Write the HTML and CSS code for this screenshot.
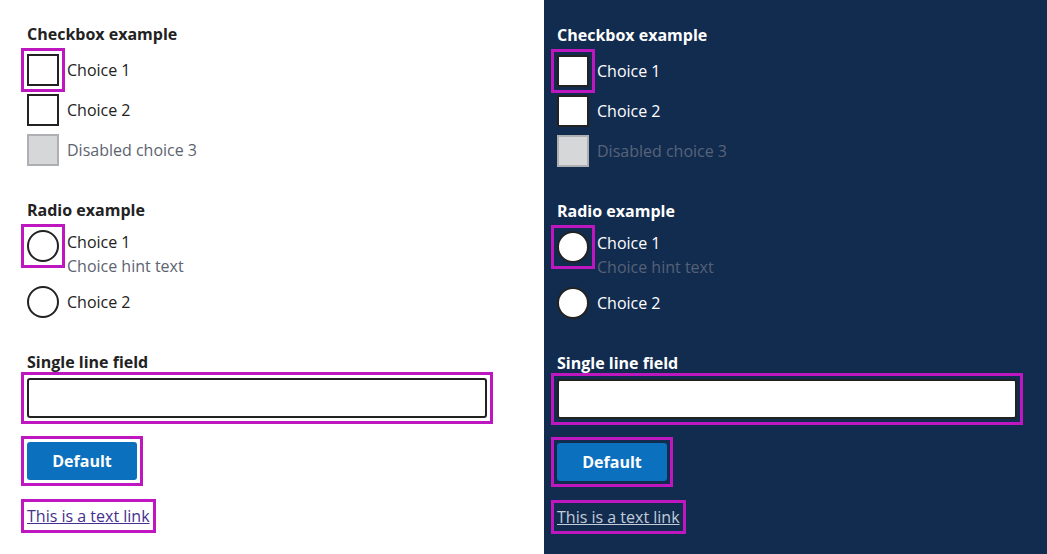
FILE: index.html
```html
<!DOCTYPE html>
<html lang="en">
<head>
<meta charset="utf-8">
<title>Form controls</title>
<link rel="stylesheet" href="styles.css">
</head>
<body>
<div class="page">
  <section class="panel light">
    <fieldset class="group">
      <legend class="legend">Checkbox example</legend>
      <div class="options">
        <label class="opt"><span class="ring"><input type="checkbox" class="check"></span><span class="txt">Choice 1</span></label>
        <label class="opt"><span class="noring"><input type="checkbox" class="check"></span><span class="txt">Choice 2</span></label>
        <label class="opt disabled"><span class="noring"><input type="checkbox" class="check" disabled></span><span class="txt">Disabled choice 3</span></label>
      </div>
    </fieldset>
    <fieldset class="group radios">
      <legend class="legend">Radio example</legend>
      <div class="options">
        <label class="opt top"><span class="ring"><input type="radio" name="r1" class="radio"></span><span class="txtblock"><span class="txt">Choice 1</span><span class="hint">Choice hint text</span></span></label>
        <label class="opt"><span class="noring"><input type="radio" name="r1" class="radio"></span><span class="txt">Choice 2</span></label>
      </div>
    </fieldset>
    <div class="field">
      <label class="legend field-label" for="f1">Single line field</label>
      <span class="ring"><input id="f1" type="text" class="input"></span>
    </div>
    <div class="btn-row"><span class="ring"><button class="btn" type="button">Default</button></span></div>
    <div class="link-row"><a class="link" href="#">This is a text link</a></div>
  </section>
  <section class="panel dark">
    <fieldset class="group">
      <legend class="legend">Checkbox example</legend>
      <div class="options">
        <label class="opt"><span class="ring"><input type="checkbox" class="check"></span><span class="txt">Choice 1</span></label>
        <label class="opt"><span class="noring"><input type="checkbox" class="check"></span><span class="txt">Choice 2</span></label>
        <label class="opt disabled"><span class="noring"><input type="checkbox" class="check" disabled></span><span class="txt">Disabled choice 3</span></label>
      </div>
    </fieldset>
    <fieldset class="group radios">
      <legend class="legend">Radio example</legend>
      <div class="options">
        <label class="opt top"><span class="ring"><input type="radio" name="r2" class="radio"></span><span class="txtblock"><span class="txt">Choice 1</span><span class="hint">Choice hint text</span></span></label>
        <label class="opt"><span class="noring"><input type="radio" name="r2" class="radio"></span><span class="txt">Choice 2</span></label>
      </div>
    </fieldset>
    <div class="field">
      <label class="legend field-label" for="f2">Single line field</label>
      <span class="ring"><input id="f2" type="text" class="input"></span>
    </div>
    <div class="btn-row"><span class="ring"><button class="btn" type="button">Default</button></span></div>
    <div class="link-row"><a class="link" href="#">This is a text link</a></div>
  </section>
</div>
</body>
</html>
```
FILE: styles.css
```css
* { box-sizing: border-box; }
html, body { margin: 0; padding: 0; height: 100%; }
body {
  font-family: "Open Sans", "Liberation Sans", sans-serif;
  font-size: 16px;
  line-height: 24px;
  color: #222222;
}
.page { display: flex; height: 100vh; }
.panel { display: flex; flex-direction: column; align-items: flex-start; }
.light { width: 544px; background: #ffffff; padding: 22px 0 0 27px; }
.dark { flex: 1; background: #122c50; padding: 23px 0 0 13px; color: #ffffff; }

.group { border: 0; margin: 0; padding: 0; min-width: 0; }
.legend {
  display: block;
  padding: 0;
  font-weight: 700;
  font-size: 16px;
  line-height: 24px;
  margin-bottom: 8px;
}
.group.radios { margin-top: 32px; }
.options { display: flex; flex-direction: column; gap: 8px; }
.opt { display: flex; align-items: center; gap: 8px; }
.opt.top { align-items: flex-start; }
.txtblock { display: flex; flex-direction: column; }
.hint { color: #5d6371; }
.dark .hint { color: #566176; }
.disabled .txt { color: #5d6371; }
.dark .disabled .txt { color: #586378; }

.ring, .noring { display: flex; flex: none; }
.ring { outline: 3px solid #bf17bf; outline-offset: 3px; }

.check, .radio {
  appearance: none;
  -webkit-appearance: none;
  margin: 0;
  width: 32px;
  height: 32px;
  border: 2px solid #222222;
  background: #ffffff;
  flex: none;
}
.light .check, .light .radio { background: transparent; }
.radio { border-radius: 50%; }
.check:disabled, .light .check:disabled {
  background: #d6d7d9;
  border-color: #adafb3;
}

.field { display: flex; flex-direction: column; align-items: flex-start; margin-top: 32px; }
.field-label { margin-bottom: 4px; }
.input {
  width: 460px;
  height: 40px;
  margin: 0;
  border: 2px solid #222222;
  border-radius: 3px;
  background: #ffffff;
  font: inherit;
  padding: 0 8px;
  outline: none;
}

.btn-row { margin-top: 24px; display: flex; }
.btn {
  width: 110px;
  height: 38px;
  margin: 0;
  border: 0;
  border-radius: 3px;
  background: #0b70bd;
  color: #ffffff;
  font-family: "Open Sans", "Liberation Sans", sans-serif;
  font-weight: 700;
  font-size: 16px;
  line-height: 24px;
  padding: 0;
  display: block;
}

.link-row { margin-top: 24px; line-height: 24px; }
.link {
  color: #44308f;
  text-decoration: underline;
  outline: 3px solid #bf17bf;
  outline-offset: 3px;
}
.dark .link { color: #c3ccd8; }
```
